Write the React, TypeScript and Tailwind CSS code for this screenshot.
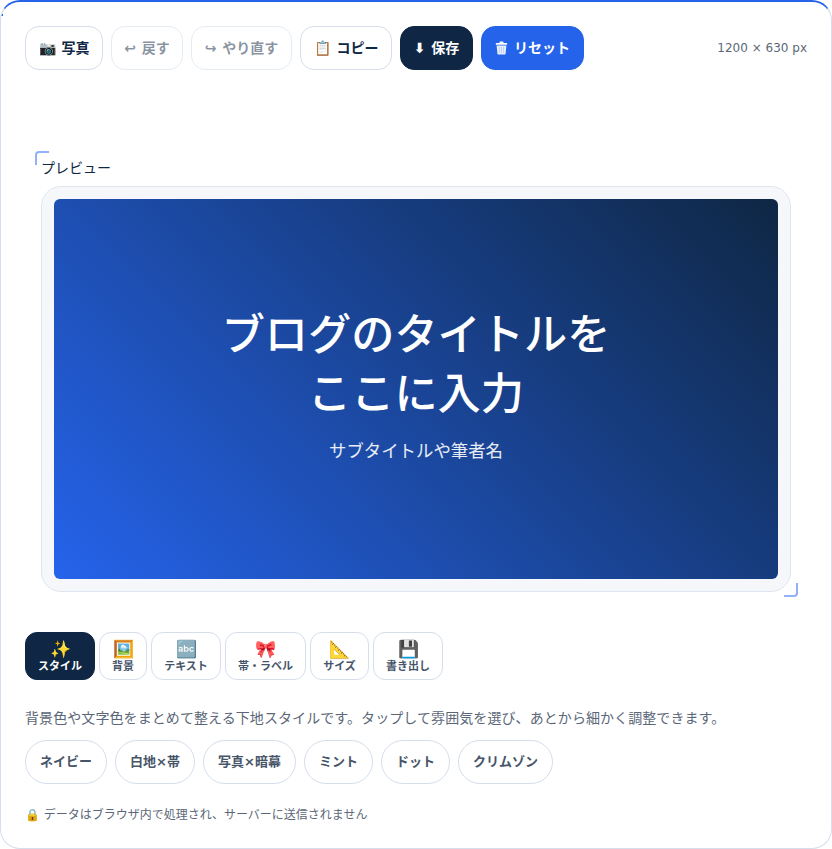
import React from "react"

const font = "font-['DejaVu_Sans','Noto_Sans_CJK_JP',sans-serif]"

function TrashIcon() {
  return (
    <svg width="13" height="14" viewBox="0 0 13 14" aria-hidden="true">
      <path d="M4.5 2V1.2C4.5.8 4.8.5 5.2.5h2.6c.4 0 .7.3.7.7V2h3c.4 0 .7.3.7.7v1H.8v-1c0-.4.3-.7.7-.7z" fill="#ffffff" />
      <path d="M1.6 4.6h9.8l-.8 8.2c0 .4-.4.7-.8.7H3.2c-.4 0-.8-.3-.8-.7z" fill="#e6eefc" />
      <path d="M4.4 6v6M6.5 6v6M8.6 6v6" stroke="#b4c9f5" strokeWidth="0.8" />
    </svg>
  )
}

const toolbar = [
  { icon: "📷", label: "写真", cls: "w-[78px] border-[#d5deea] bg-white text-[#0f2744]" },
  { icon: "↩", label: "戻す", cls: "w-[72px] border-[#e6ecf3] bg-white text-[#0f2744]/50" },
  { icon: "↪", label: "やり直す", cls: "w-[101px] border-[#e6ecf3] bg-white text-[#0f2744]/50" },
  { icon: "📋", label: "コピー", cls: "w-[92px] border-[#d5deea] bg-white text-[#0f2744]" },
  { icon: "⬇", label: "保存", cls: "w-[73px] border-[#0f2744] bg-[#0f2744] text-white" },
  { icon: <TrashIcon />, label: "リセット", cls: "w-[103px] border-[#2563eb] bg-[#2563eb] text-white" },
]

const tabs = [
  { icon: "✨", label: "スタイル", w: "w-[70px]", active: true },
  { icon: "🖼️", label: "背景", w: "w-[48px]" },
  { icon: "🔤", label: "テキスト", w: "w-[70px]" },
  { icon: "🎀", label: "帯・ラベル", w: "w-[81px]" },
  { icon: "📐", label: "サイズ", w: "w-[59px]" },
  { icon: "💾", label: "書き出し", w: "w-[70px]" },
]

const presets = [
  { label: "ネイビー", w: "w-[82px]" },
  { label: "白地×帯", w: "w-[80px]" },
  { label: "写真×暗幕", w: "w-[93px]" },
  { label: "ミント", w: "w-[69px]" },
  { label: "ドット", w: "w-[69px]" },
  { label: "クリムゾン", w: "w-[95px]" },
]

export default function App() {
  return (
    <div className={`${font} relative h-[849px] w-[832px] overflow-hidden rounded-[20px] border border-t-2 border-[#d5deea] border-t-[#2563eb] bg-white px-6 pt-6`}>
      <div className="absolute left-[-1px] top-[12px] h-[2px] w-[3px] bg-[#2563eb]"></div>

      <div className="flex items-center">
        <div className="flex gap-2">
          {toolbar.map((b) => (
            <button key={b.label} className={`flex h-11 items-center justify-center gap-1.5 rounded-[14px] border text-[14px] font-bold ${b.cls}`}>
              <span>{b.icon}</span>
              <span>{b.label}</span>
            </button>
          ))}
        </div>
        <span className="ml-auto mr-0 text-[12px] text-[#5b6778]">1200 × 630 px</span>
      </div>

      <div className="relative mt-[81px] px-4">
        <div className="absolute left-[10px] top-0 h-[14px] w-[14px] rounded-tl-[4px] border-l-2 border-t-2 border-[#93b1fa]"></div>
        <div className="absolute bottom-[-5px] right-[9px] h-[14px] w-[14px] rounded-br-[4px] border-b-2 border-r-2 border-[#93b1fa]"></div>
        <div className="text-[14px] leading-[35px] text-[#0f2744]">プレビュー</div>
        <div className="rounded-[20px] border border-[#dfe5ee] bg-[#f5f7fb] p-3">
          <div className="flex h-[380px] flex-col items-center justify-center rounded-[6px] bg-[linear-gradient(45deg,#2563eb,#0f2744)] pb-[9px] text-white">
            <div className="text-center text-[43.2px] font-medium leading-[58.6px]">
              ブログのタイトルを
              <br />
              ここに入力
            </div>
            <div className="mt-4 text-[17.4px] leading-[24px] text-white/90">サブタイトルや筆者名</div>
          </div>
        </div>
      </div>

      <div className="mt-10 flex gap-1">
        {tabs.map((t) => (
          <button key={t.label} className={`flex h-12 ${t.w} flex-col items-center justify-center rounded-xl border pt-0.5 text-[11px] font-bold ${t.active ? "border-[#0f2744] bg-[#0f2744] text-white" : "border-[#d5deea] bg-white text-[#475569]"}`}>
            <span className="text-[17px] leading-[20px]">{t.icon}</span>
            <span className="leading-[16px]">{t.label}</span>
          </button>
        ))}
      </div>

      <p className="mt-[28px] text-[14px] leading-[20px] tracking-[0.08px] text-[#5b6778]">背景色や文字色をまとめて整える下地スタイルです。タップして雰囲気を選び、あとから細かく調整できます。</p>

      <div className="mt-3 flex gap-2">
        {presets.map((p) => (
          <button key={p.label} className={`h-11 ${p.w} rounded-full border border-[#d5deea] bg-white text-[13px] font-bold text-[#475569]`}>
            {p.label}
          </button>
        ))}
      </div>

      <p className="mt-[22px] text-[12px] leading-[18px] text-[#5b6778]">🔒 データはブラウザ内で処理され、サーバーに送信されません</p>
    </div>
  )
}
